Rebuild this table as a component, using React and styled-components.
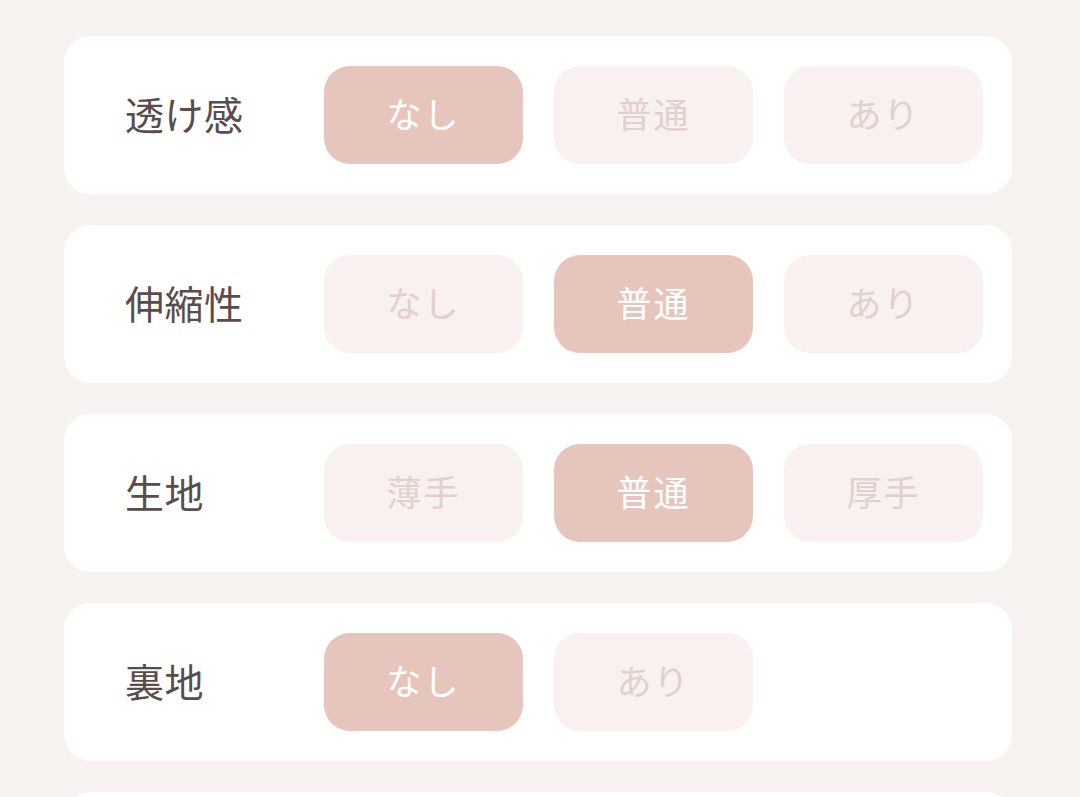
import React, { useState } from "react";
import styled, { createGlobalStyle } from "styled-components";

const GlobalStyle = createGlobalStyle`
  html, body {
    margin: 0;
    padding: 0;
    background: #f7f1f0;
    font-family: "Noto Sans CJK JP", "Noto Sans", sans-serif;
  }
  body { overflow: hidden; }
`;

const Page = styled.div`
  display: flex;
  flex-direction: column;
  gap: 31px;
  padding: 36px 68px 40px 64px;
  width: 948px;
`;

const Card = styled.section`
  display: grid;
  grid-template-columns: 168px repeat(3, 199px);
  column-gap: 31px;
  align-items: center;
  min-height: 98px;
  padding: 30px 29px 30px 61px;
  background: #ffffff;
  border-radius: 26px;
`;

const Label = styled.div`
  font-size: 39px;
  font-weight: 400;
  color: #5a4c4a;
  letter-spacing: 0.5px;
  white-space: nowrap;
  padding-bottom: 5px;
`;

const Option = styled.button`
  height: 98px;
  border: none;
  border-radius: 26px;
  padding: 0 0 5px;
  font-family: inherit;
  font-size: 35px;
  font-weight: 400;
  letter-spacing: 2px;
  cursor: pointer;
  background: ${(p) => (p.$active ? "#e6c5bc" : "#f8f1f0")};
  color: ${(p) => (p.$active ? "#ffffff" : "#e3d0cc")};
`;

const rows = [
  { label: "透け感", options: ["なし", "普通", "あり"], selected: 0 },
  { label: "伸縮性", options: ["なし", "普通", "あり"], selected: 1 },
  { label: "生地", options: ["薄手", "普通", "厚手"], selected: 1 },
  { label: "裏地", options: ["なし", "あり"], selected: 0 },
];

function Row({ row }) {
  const [sel, setSel] = useState(row.selected);
  return (
    <Card>
      <Label>{row.label}</Label>
      {row.options.map((o, i) => (
        <Option key={o} $active={i === sel} onClick={() => setSel(i)}>
          {o}
        </Option>
      ))}
    </Card>
  );
}

export default function App() {
  return (
    <>
      <GlobalStyle />
      <Page>
        {rows.map((r) => (
          <Row key={r.label} row={r} />
        ))}
        <Card aria-hidden="true" />
      </Page>
    </>
  );
}
